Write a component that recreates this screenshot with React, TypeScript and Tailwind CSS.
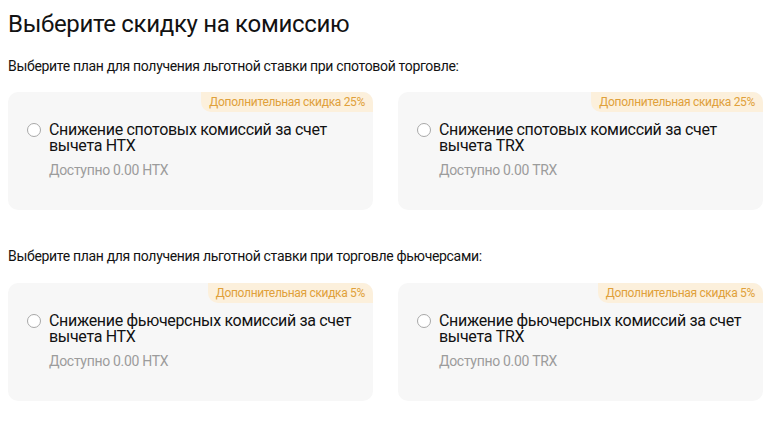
import React from "react";

type Plan = { title: string; avail: string; badge: string };

function Card({ p }: { p: Plan }) {
  return (
    <div className="relative rounded-[10px] bg-[#f7f7f7] pt-[30px] pb-[30px] pl-[19px] pr-4 h-[118px]">
      <div className="absolute right-0 top-0 h-[20px] rounded-tr-[10px] rounded-bl-[10px] bg-[#fcf0dc] px-[8px] text-[12px] leading-[20px] text-[#e0a03a]">
        {p.badge}
      </div>
      <div className="flex items-start gap-[8px]">
        <div className="mt-[1px] h-[14px] w-[14px] shrink-0 rounded-full border border-[#a8a8a8] bg-white" />
        <div className="flex flex-col">
          <div className="text-[16px] leading-[16px] text-[#121212]">{p.title}</div>
          <div className="mt-[6px] text-[14px] leading-[20px] text-[#9c9c9c]">{p.avail}</div>
        </div>
      </div>
    </div>
  );
}

export default function App() {
  const spot: Plan[] = [
    { title: "Снижение спотовых комиссий за счет вычета HTX", avail: "Доступно 0.00 HTX", badge: "Дополнительная скидка 25%" },
    { title: "Снижение спотовых комиссий за счет вычета TRX", avail: "Доступно 0.00 TRX", badge: "Дополнительная скидка 25%" },
  ];
  const fut: Plan[] = [
    { title: "Снижение фьючерсных комиссий за счет вычета HTX", avail: "Доступно 0.00 HTX", badge: "Дополнительная скидка 5%" },
    { title: "Снижение фьючерсных комиссий за счет вычета TRX", avail: "Доступно 0.00 TRX", badge: "Дополнительная скидка 5%" },
  ];
  return (
    <div className="w-[775px] h-[427px] bg-white pl-[8px] pt-[8px] tracking-[-0.02em]" style={{ fontFamily: "Roboto, 'Noto Sans', sans-serif" }}>
      <div className="w-[755px]">
        <h1 className="text-[24px] leading-[32px] text-[#121212] font-normal">Выберите скидку на комиссию</h1>
        <div className="mt-[16px] text-[14px] leading-[20px] text-[#121212]">
          Выберите план для получения льготной ставки при спотовой торговле:
        </div>
        <div className="mt-[16px] grid grid-cols-2 gap-[25px]">
          {spot.map((p) => (
            <Card key={p.title} p={p} />
          ))}
        </div>
        <div className="mt-[36px] text-[14px] leading-[20px] text-[#121212]">
          Выберите план для получения льготной ставки при торговле фьючерсами:
        </div>
        <div className="mt-[17px] grid grid-cols-2 gap-[25px]">
          {fut.map((p) => (
            <Card key={p.title} p={p} />
          ))}
        </div>
      </div>
    </div>
  );
}
